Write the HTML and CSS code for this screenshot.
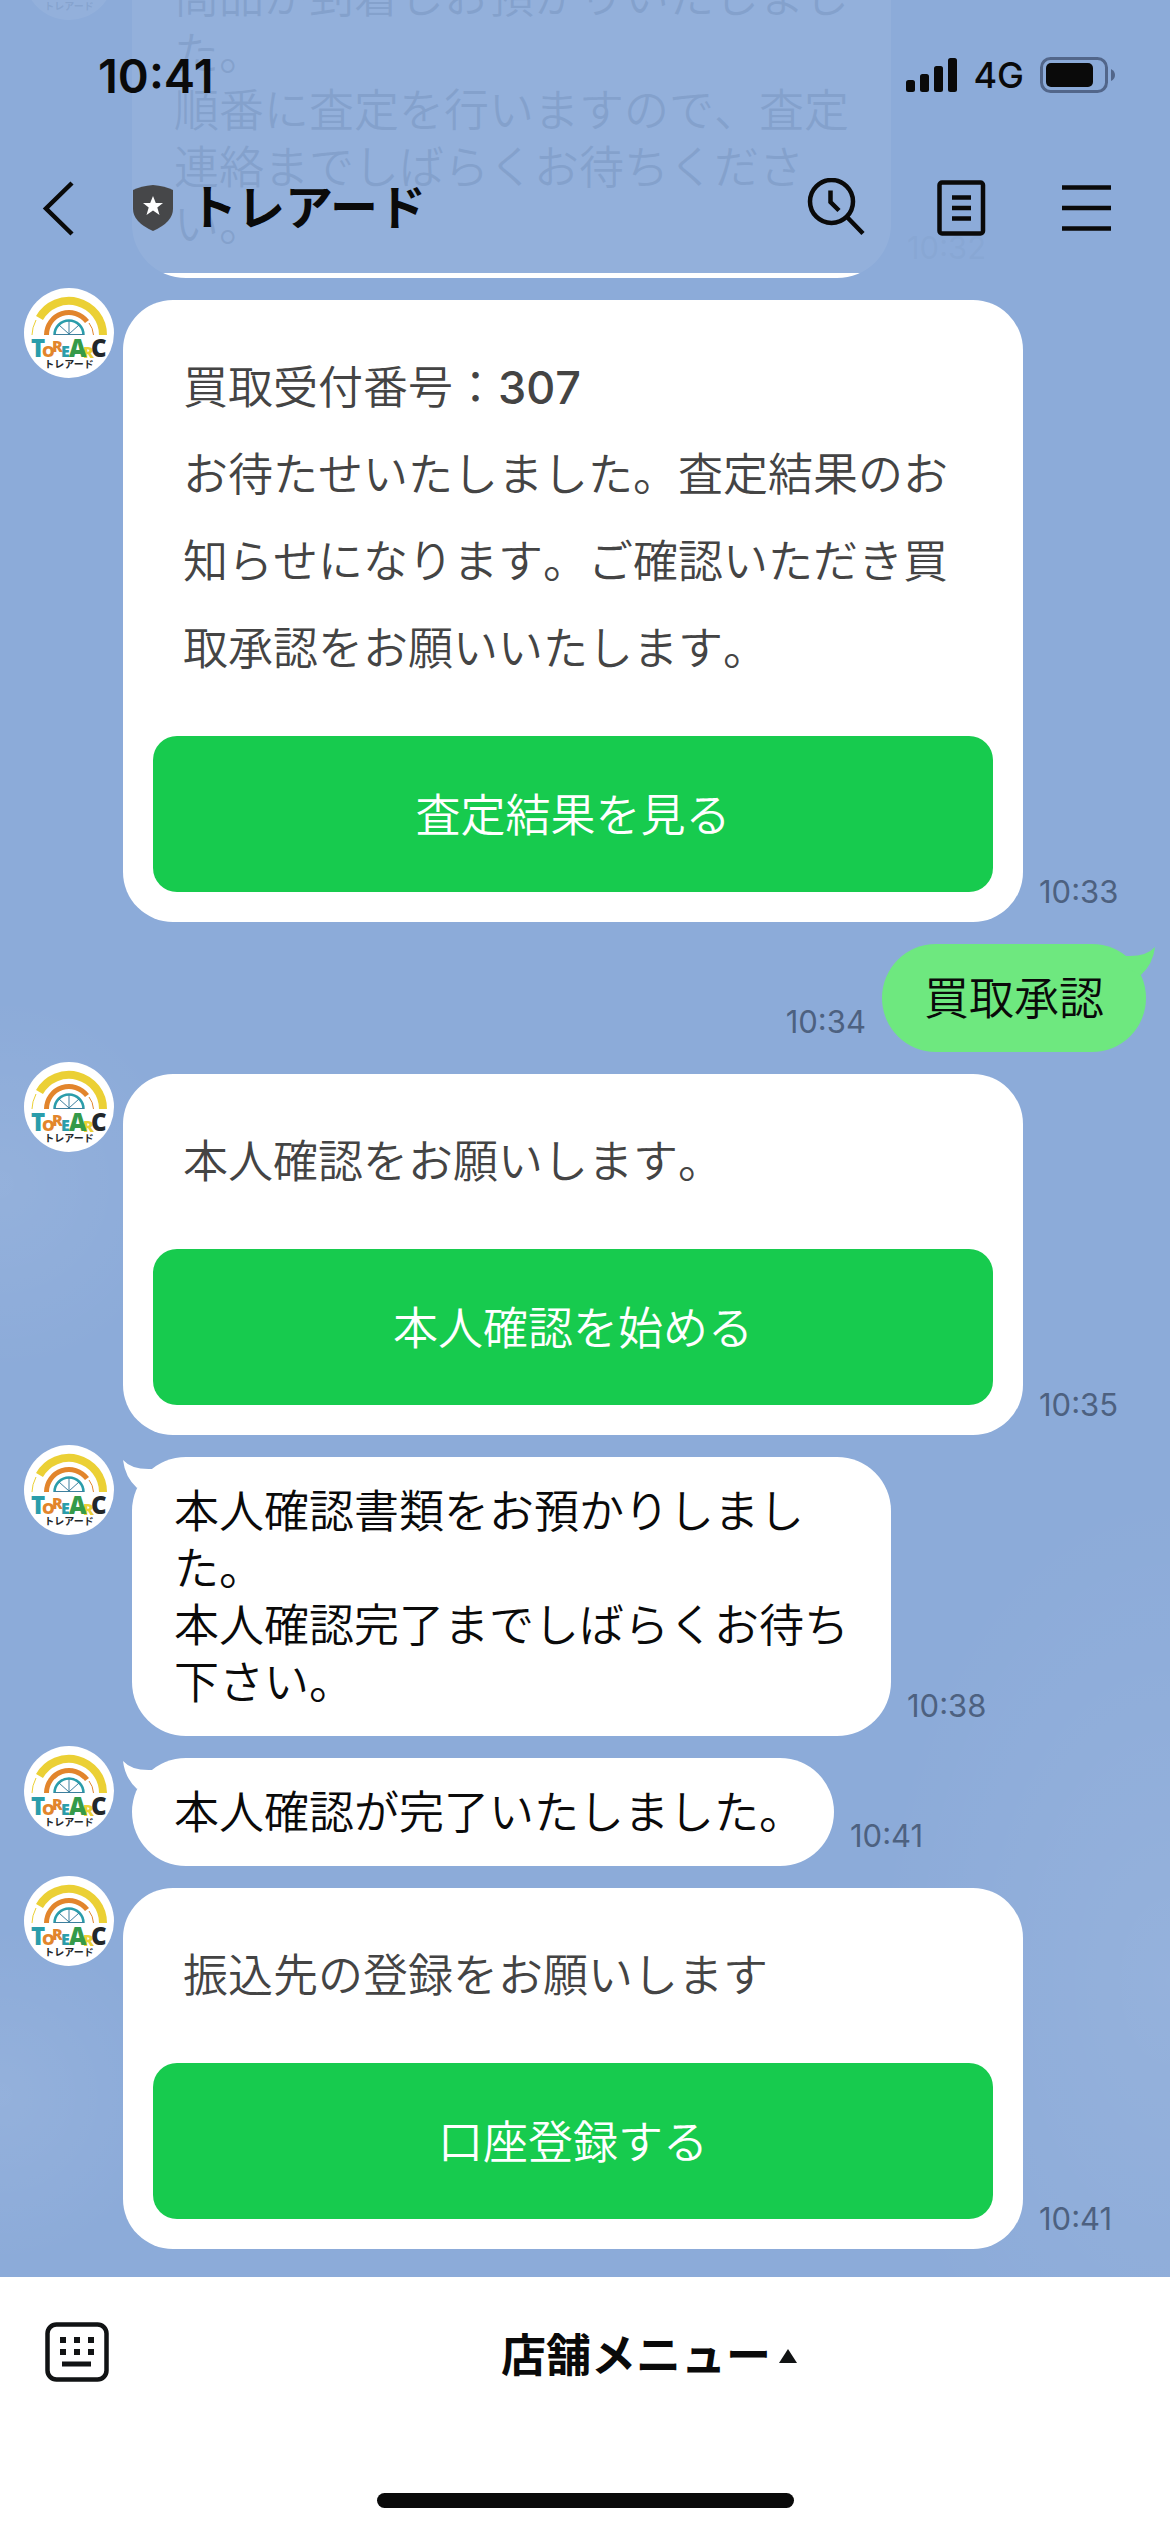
FILE: index.html
```html
<!DOCTYPE html>
<html lang="ja">
<head>
<meta charset="utf-8">
<meta name="viewport" content="width=device-width, initial-scale=1">
<title>トレアード</title>
<link rel="stylesheet" href="styles.css">
</head>
<body>
<svg class="sprite" aria-hidden="true">
  <symbol id="logo" viewBox="0 0 90 90">
    <circle cx="45" cy="45" r="45" fill="#fff"/>
    <g fill="none">
      <path d="M15.500 30A34 34 0 0 1 79 47" stroke="#ebd035" stroke-width="8"/>
      <path d="M8 47Q8 40 12 32" stroke="#ebd035" stroke-width="1"/>
      <path d="M22.500 47A22.500 22.500 0 0 1 63 33.500" stroke="#e2852c" stroke-width="5"/>
      <path d="M65 35Q69 40 69.500 47" stroke="#e2852c" stroke-width="1"/>
      <path d="M30.500 47A14.500 14.500 0 0 1 59.500 47" stroke="#2a9dab" stroke-width="2.500"/>
      <path d="M30 46.500H60M45 33V46L35 37M45 46L55 37" stroke="#3d7f9d" stroke-width="1"/>
    </g>
    <g class="logo-word">
      <text x="7" y="69" font-size="24" fill="#2a9dab">T</text>
      <text x="18" y="69" font-size="16" fill="#e2852c">O</text>
      <text x="28" y="64" font-size="16" fill="#e2852c">R</text>
      <text x="37" y="69" font-size="16" fill="#2a9dab">E</text>
      <text x="59" y="70" font-size="16" fill="#ebd035">R</text>
      <text x="45" y="69" font-size="24" fill="#359a49">A</text>
      <text x="67" y="69" font-size="24" fill="#22272a">C</text>
    </g>
    <text class="logo-kana" x="45" y="80" font-size="10" text-anchor="middle" fill="#22272a">トレアード</text>
  </symbol>
  <symbol id="tail" viewBox="0 0 32 32">
    <path d="M0 3Q9 13 29 12L29 24L14 31Q2 20 0 3Z" fill="currentColor"/>
  </symbol>
</svg>

<div class="screen">
  <header class="header">
    <div class="status">
      <span class="clock">10:41</span>
      <div class="status-right">
        <svg width="51" height="36" viewBox="0 0 51 36" fill="#0a0a0a" aria-hidden="true">
          <rect x="0" y="23" width="9" height="12" rx="2.500"/>
          <rect x="14" y="17" width="9" height="18" rx="2.500"/>
          <rect x="28" y="9" width="9" height="26" rx="2.500"/>
          <rect x="42" y="1" width="9" height="34" rx="2.500"/>
        </svg>
        <span class="network">4G</span>
        <svg width="76" height="36" viewBox="0 0 76 36" aria-hidden="true">
          <rect x="1.500" y="1.500" width="65" height="33" rx="9" fill="none" stroke="#52668a" stroke-width="3"/>
          <rect x="6" y="6" width="47" height="24" rx="5" fill="#0a0a0a"/>
          <path d="M71 12Q75 14 75 18Q75 22 71 24Z" fill="#52668a"/>
        </svg>
      </div>
    </div>
    <nav class="nav">
      <button class="icon-button" type="button" aria-label="戻る">
        <svg width="36" height="60" viewBox="0 0 36 60" fill="none" stroke="#0a0a0a" stroke-width="4.500"><path d="M32 5L6 30.500L32 56"/></svg>
      </button>
      <svg class="shield" width="40" height="46" viewBox="0 0 40 46" aria-hidden="true">
        <path d="M0 5Q8 1 20 0Q32 1 40 5V24Q40 37 20 46Q0 37 0 24Z" fill="#464749"/>
        <path d="M20 11L22.800 18H30L24.300 22.500L26.500 30L20 25.500L13.500 30L15.700 22.500L10 18H17.200Z" fill="#fff"/>
      </svg>
      <h1 class="title">トレアード</h1>
      <div class="actions">
        <button class="icon-button" type="button" aria-label="検索">
          <svg width="60" height="60" viewBox="0 0 60 60" fill="none" stroke="#0a0a0a" stroke-width="4.500"><circle cx="26.500" cy="23.500" r="21.500"/><path d="M25.500 12.500V24L34 32.500M42 39L58 55.500"/></svg>
        </button>
        <button class="icon-button" type="button" aria-label="ノート">
          <svg width="60" height="60" viewBox="0 0 60 60" fill="none" stroke="#0a0a0a" stroke-width="4.500"><rect x="8.500" y="4.500" width="43.500" height="51" rx="2.500"/><path d="M21 19.500H40M21 30H40M21 40.500H40"/></svg>
        </button>
        <button class="icon-button" type="button" aria-label="メニュー">
          <svg width="60" height="60" viewBox="0 0 60 60" fill="none" stroke="#0a0a0a" stroke-width="4.500"><path d="M5 9.500H54M5 30H54M5 50.500H54"/></svg>
        </button>
      </div>
    </nav>
  </header>

  <main class="feed">
    <div class="message">
      <svg class="avatar" role="img" aria-label="トレアード"><use href="#logo"/></svg>
      <div class="bubble">
        <svg class="tail" aria-hidden="true"><use href="#tail"/></svg>
        <p>商品が到着しお預かりいたしました。</p>
        <p>順番に査定を行いますので、査定連絡までしばらくお待ちください。</p>
      </div>
      <time class="time">10:32</time>
    </div>

    <div class="message">
      <svg class="avatar" role="img" aria-label="トレアード"><use href="#logo"/></svg>
      <section class="card">
        <div class="card-text">
          <p>買取受付番号：<span class="number">307</span></p>
          <p>お待たせいたしました。査定結果のお知らせになります。ご確認いただき買取承認をお願いいたします。</p>
        </div>
        <button class="card-button" type="button">査定結果を見る</button>
      </section>
      <time class="time">10:33</time>
    </div>

    <div class="message own">
      <time class="time">10:34</time>
      <div class="bubble">
        <svg class="tail" aria-hidden="true"><use href="#tail"/></svg>
        <p>買取承認</p>
      </div>
    </div>

    <div class="message">
      <svg class="avatar" role="img" aria-label="トレアード"><use href="#logo"/></svg>
      <section class="card">
        <div class="card-text">
          <p>本人確認をお願いします。</p>
        </div>
        <button class="card-button" type="button">本人確認を始める</button>
      </section>
      <time class="time">10:35</time>
    </div>

    <div class="message">
      <svg class="avatar" role="img" aria-label="トレアード"><use href="#logo"/></svg>
      <div class="bubble">
        <svg class="tail" aria-hidden="true"><use href="#tail"/></svg>
        <p>本人確認書類をお預かりしました。</p>
        <p>本人確認完了までしばらくお待ち下さい。</p>
      </div>
      <time class="time">10:38</time>
    </div>

    <div class="message">
      <svg class="avatar" role="img" aria-label="トレアード"><use href="#logo"/></svg>
      <div class="bubble">
        <svg class="tail" aria-hidden="true"><use href="#tail"/></svg>
        <p>本人確認が完了いたしました。</p>
      </div>
      <time class="time">10:41</time>
    </div>

    <div class="message">
      <svg class="avatar" role="img" aria-label="トレアード"><use href="#logo"/></svg>
      <section class="card">
        <div class="card-text">
          <p>振込先の登録をお願いします</p>
        </div>
        <button class="card-button" type="button">口座登録する</button>
      </section>
      <time class="time">10:41</time>
    </div>
  </main>

  <footer class="footer">
    <div class="footer-row">
      <button class="icon-button keyboard" type="button" aria-label="キーボード">
        <svg width="64" height="60" viewBox="0 0 64 60" fill="#111314"><rect x="2.500" y="2.500" width="59" height="55" rx="9" fill="none" stroke="#111314" stroke-width="4.500"/><path d="M15 15h6v6h-6zM29 15h6v6h-6zM43 15h6v6h-6zM15 27h6v6h-6zM29 27h6v6h-6zM43 27h6v6h-6zM17 39.500h29v5H17z"/></svg>
      </button>
      <button class="menu-button" type="button">店舗メニュー
        <svg class="caret" width="18" height="14" viewBox="0 0 18 14" aria-hidden="true"><path d="M9 0L18 14H0Z" fill="#111314"/></svg>
      </button>
    </div>
    <div class="home-indicator"></div>
  </footer>
</div>
</body>
</html>
```
FILE: styles.css
```css
*,
*::before,
*::after {
  box-sizing: border-box;
}

body {
  margin: 0;
  background: #fff;
  color: #0a0a0a;
  font-family: Inter, "Noto Sans CJK JP", sans-serif;
  font-size: 45px;
}

p,
h1 {
  margin: 0;
}

button {
  margin: 0;
  padding: 0;
  border: 0;
  background: none;
  color: inherit;
  font: inherit;
  cursor: pointer;
}

svg {
  display: block;
  flex: none;
}

.sprite {
  position: absolute;
  width: 0;
  height: 0;
}

.screen {
  position: relative;
  display: flex;
  flex-direction: column;
  height: 100vh;
}

/* Header, translucent over the scrolled feed */
.header {
  position: absolute;
  top: 0;
  left: 0;
  right: 0;
  z-index: 2;
  padding-bottom: 7px;
  background: rgba(140, 171, 217, 0.94);
}

.status {
  display: flex;
  align-items: center;
  justify-content: space-between;
  height: 150px;
  padding: 0 54px 0 98px;
}

.clock {
  font-size: 47px;
  font-weight: 600;
}

.status-right {
  display: flex;
  align-items: center;
  gap: 16px;
}

.network {
  font-size: 36px;
  font-weight: 500;
}

.nav {
  display: flex;
  align-items: center;
  height: 116px;
  padding: 0 53px 0 40px;
}

.shield {
  margin-left: 57px;
}

.title {
  margin-left: 16px;
  font-size: 48px;
  font-weight: 700;
  line-height: 60px;
}

.actions {
  display: flex;
  gap: 66px;
  margin-left: auto;
}

/* Feed, pinned to its newest message */
.feed {
  flex: 1;
  min-height: 0;
  display: flex;
  flex-direction: column;
  justify-content: flex-end;
  gap: 22px;
  padding: 0 24px 28px;
  overflow: hidden;
  background:
    radial-gradient(circle at 0 52%, rgba(255, 255, 255, 0.07), transparent 190px),
    radial-gradient(circle at 0 92%, rgba(255, 255, 255, 0.07), transparent 170px),
    radial-gradient(ellipse 300px 500px at 100% 87%, rgba(255, 255, 255, 0.08), transparent),
    #8cabd9;
}

.message {
  display: flex;
  flex: none;
  align-items: flex-start;
}

.avatar {
  width: 90px;
  height: 90px;
  margin: -12px 9px 0 0;
}

.logo-word {
  font-family: "Open Sans", sans-serif;
  font-weight: 800;
}

.logo-kana {
  font-family: "Noto Sans CJK JP", sans-serif;
  font-weight: 700;
}

.time {
  align-self: flex-end;
  padding: 0 16px 12px;
  color: #4d6180;
  font-size: 31px;
  line-height: 36px;
}

.bubble {
  position: relative;
  max-width: 759px;
  margin-left: 9px;
  padding: 26px 30px 25px 42px;
  border-radius: 54px;
  background: #fff;
  font-weight: 350;
  font-kerning: none;
  line-height: 57px;
}

.tail {
  position: absolute;
  top: 0;
  left: -9px;
  width: 32px;
  height: 32px;
  color: #fff;
}

.own {
  justify-content: flex-end;
}

.own .bubble {
  margin: 0;
  padding: 26px 42px 25px;
  background: #6ee87f;
}

.own .tail {
  left: auto;
  right: -9px;
  color: #6ee87f;
  transform: scaleX(-1);
}

.card {
  flex: 0 1 900px;
  padding: 44px 30px 30px;
  border-radius: 50px;
  background: #fff;
  color: #444;
  font-weight: 350;
  font-kerning: none;
}

.card-text {
  padding: 0 30px;
  line-height: 87px;
}

.number {
  font-weight: 450;
}

.card-button {
  display: block;
  width: 100%;
  height: 156px;
  margin-top: 44px;
  padding-bottom: 4px;
  border-radius: 24px;
  background: #17cb4e;
  color: #fff;
}

/* Footer */
.footer {
  padding-bottom: 24px;
  background: #fff;
}

.footer-row {
  display: grid;
  grid-template-columns: 128px 1fr;
  align-items: center;
  height: 150px;
}

.keyboard {
  justify-self: center;
  padding-left: 26px;
}

.menu-button {
  display: flex;
  align-items: center;
  justify-content: center;
  gap: 8px;
  height: 100%;
  font-weight: 700;
}

.caret {
  margin-top: 8px;
}

.home-indicator {
  width: 417px;
  max-width: 60%;
  height: 15px;
  margin: 66px auto 0;
  border-radius: 8px;
  background: #0a0a0a;
}
```
